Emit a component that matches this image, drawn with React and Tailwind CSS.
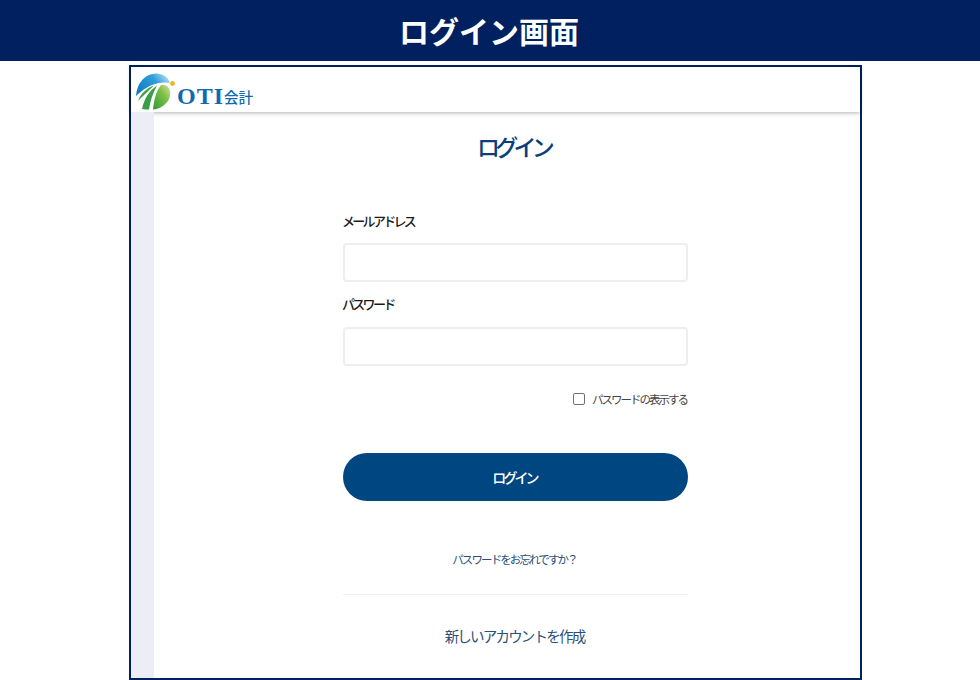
import React from 'react';

const Logo = () => (
  <div className="flex items-end">
    <svg width="40" height="37" viewBox="0 0 40 37" className="shrink-0">
      <defs>
        <linearGradient id="blue" x1="0" y1="0.7" x2="1" y2="0.2">
          <stop offset="0" stopColor="#0f7cc4" />
          <stop offset="0.6" stopColor="#2f9ed8" />
          <stop offset="1" stopColor="#b4dff2" />
        </linearGradient>
        <linearGradient id="green" x1="0" y1="1" x2="1" y2="0">
          <stop offset="0" stopColor="#2f9a3e" />
          <stop offset="0.6" stopColor="#7fbf45" />
          <stop offset="1" stopColor="#d5e6a0" />
        </linearGradient>
      </defs>
      <path d="M0 23C1 9 10 0.5 20 0.5C27 0.5 32 4 34 10C25 8 12 11 0 23Z" fill="url(#blue)" />
      <path d="M2 28C5 20 11 15 18 12.5C12 18 7 23 2 28Z" fill="#3ea043" />
      <path d="M6 36C8 26 13 18 21 12.5C17 20 14 28 13 36.5C10 36.5 8 36.5 6 36Z" fill="#37a047" />
      <path d="M17 36.5C18 27 20 18 25 12C34 11 36 19 33 26C30 32 24 36 17 36.5Z" fill="url(#green)" />
      <circle cx="36.5" cy="10.5" r="2.4" fill="#f0b429" />
    </svg>
    <span className="ml-[1px] mb-[1px] text-[24px] leading-[26px] font-bold tracking-[1px] text-[#0f69ae] font-['Liberation_Serif',serif]">OTI</span>
    <span className="mb-[3px] text-[14.5px] leading-[20px] font-medium text-[#0f69ae] font-['Noto_Sans_CJK_JP',sans-serif]">会計</span>
  </div>
);

const Field = ({ label, type, className, inputGap }) => (
  <div className={className}>
    <label className="block -ml-[1px] text-[13px] leading-[20px] font-medium tracking-[-2.7px] text-[#1a1a1a]">{label}</label>
    <input type={type} className={`${inputGap} block w-full h-[39px] rounded-[4px] border-2 border-[#eeeeee] bg-white`} />
  </div>
);

export default function App() {
  return (
    <div className="h-[680px] w-[980px] overflow-hidden bg-white font-['Noto_Sans_CJK_JP',sans-serif]">
      <header className="flex h-[61px] items-center justify-center bg-[#00205f] pb-[2px]">
        <h1 className="-ml-[2px] text-[30px] leading-[36px] font-bold text-white font-['Noto_Sans_CJK_JP',sans-serif]">ログイン画面</h1>
      </header>
      <div className="ml-[129px] mt-[4px] flex h-[615px] w-[733px] flex-col border-2 border-[#00205f] bg-white">
        <div className="flex h-[45px] shrink-0 items-end pb-[2px] pl-[5px] shadow-[0_1px_4px_rgba(0,0,0,0.3)]">
          <Logo />
        </div>
        <div className="flex min-h-0 flex-1">
          <aside className="w-[23px] shrink-0 bg-[#edeef5]" />
          <main className="flex flex-1 flex-col items-center pl-[17px] pr-0">
            <h2 className="mt-[17px] pr-[4px] text-[23px] leading-[34px] font-medium tracking-[-4.7px] text-[#0b3f77]">ログイン</h2>
            <form className="mt-[48px] w-[345px]">
              <Field label="メールアドレス" type="email" inputGap="mt-[12px]" />
              <Field label="パスワード" type="password" className="mt-[12px]" inputGap="mt-[13px]" />
              <label className="mt-[23px] flex items-center justify-end pr-[1px] text-[11.5px] leading-[20px] tracking-[-2px] text-[#444444]">
                <input type="checkbox" className="mr-[7px] h-[12px] w-[12px] appearance-none rounded-[2px] border border-[#707070] bg-white" />
                パスワードの表示する
              </label>
              <button type="button" className="mt-[44px] block h-[48px] w-full rounded-full bg-[#004680] pr-[2px] text-[14px] font-medium tracking-[-2.9px] text-white">ログイン</button>
              <a href="#" className="mt-[48px] block pr-[2px] text-center text-[11.5px] leading-[20px] tracking-[-1.9px] text-[#2b4f78]">パスワードをお忘れですか？</a>
              <div className="mt-[25px] border-t border-[#f0f0f0]" />
              <a href="#" className="mt-[30px] block pr-[2px] text-center text-[14.5px] leading-[22px] tracking-[-1.8px] text-[#2b4f78]">新しいアカウントを作成</a>
            </form>
          </main>
        </div>
      </div>
    </div>
  );
}
